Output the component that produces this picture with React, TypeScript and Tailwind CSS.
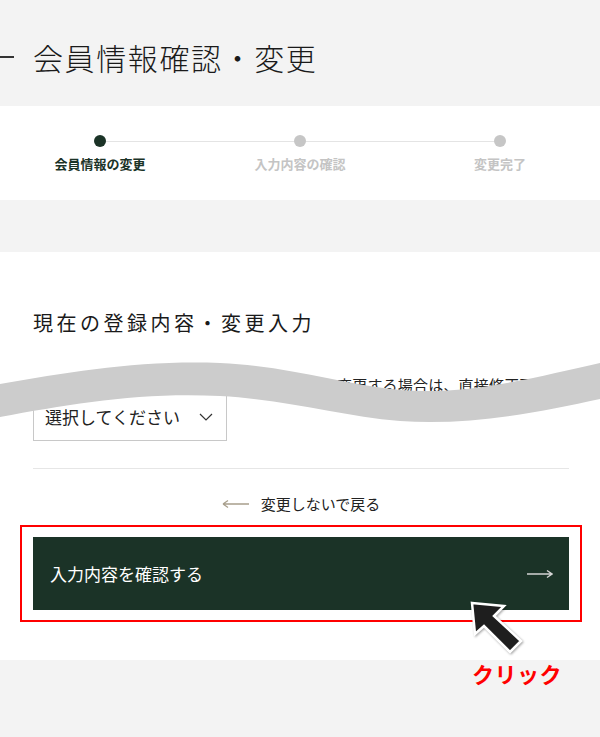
const jp = "font-['Noto_Sans_CJK_JP','Noto_Sans',sans-serif]"

const steps = [
  { label: '会員情報の変更', active: true },
  { label: '入力内容の確認', active: false },
  { label: '変更完了', active: false },
]

function StepBar() {
  return (
    <div className="bg-white pt-[29px] pb-[27px]">
      <div className="relative grid grid-cols-3">
        <div className="absolute left-[16.8%] right-[16.7%] top-[5.5px] h-px bg-[#e4e4e4]" />
        {steps.map((s) => (
          <div key={s.label} className="relative flex flex-col items-center">
            <span
              className={
                s.active
                  ? 'block h-3 w-3 rounded-full bg-[#1b3327]'
                  : 'block h-3 w-3 rounded-full bg-[#c6c6c6]'
              }
            />
            <span
              className={
                s.active
                  ? 'mt-[8px] text-[13px] leading-[18px] font-bold text-[#1b3327]'
                  : 'mt-[8px] text-[13px] leading-[18px] font-bold text-[#c4c4c4]'
              }
            >
              {s.label}
            </span>
          </div>
        ))}
      </div>
    </div>
  )
}

function Wave() {
  return (
    <svg
      className="pointer-events-none absolute left-0 top-[340px]"
      width="600"
      height="84"
      viewBox="0 0 600 84"
    >
      <path
        d="M0 44 C70 32 140 20 220 23 C290 26 340 44 400 50 C470 56 540 36 600 23 L600 59 C540 72 470 86 400 81 C340 76 290 60 220 56 C140 52 70 64 0 77 Z"
        fill="#cccccc"
      />
    </svg>
  )
}

function Cursor() {
  return (
    <svg
      className="pointer-events-none absolute left-[462px] top-[596px] drop-shadow-[1px_1px_1px_rgba(0,0,0,0.35)]"
      width="70"
      height="66"
      viewBox="0 0 70 66"
    >
      <polygon
        points="10,7 42,10 32,20 59,45 48,56 22,30 13,38"
        fill="#1e1e1e"
        stroke="#ffffff"
        strokeWidth="2.5"
        strokeLinejoin="miter"
      />
    </svg>
  )
}

export default function App() {
  return (
    <div className={`relative min-h-[737px] bg-[#f3f3f3] text-[#222] ${jp}`}>
      {/* page title */}
      <div className="flex items-center pt-[37px] pb-[29px]">
        <span className="block h-[1.5px] w-[14px] bg-[#333]" />
        <h1 className="ml-[19px] text-[30px] leading-[40px] font-light tracking-[1.6px] text-[#1a1a1a]">
          会員情報確認・変更
        </h1>
      </div>

      <StepBar />

      <div className="h-[52px]" />

      <div className="bg-white pl-[33px] pr-[31px] pt-[56px] pb-[50px]">
        <h2 className="text-[20px] leading-[30px] tracking-[3.5px] text-[#1a1a1a]">
          現在の登録内容・変更入力
        </h2>
        <p className="mt-[37px] whitespace-nowrap text-[15px] leading-[20px] tracking-[0.2px]">
          お客様のご登録内容をご確認のうえ、内容を変更する場合は、直接修正下さい
        </p>
        <button className="-mt-[2px] flex h-[48px] w-[194px] items-center justify-between border border-[#c8c8c8] pl-[11px] pr-[13px] text-[17px]">
          <span>選択してください</span>
          <svg width="14" height="8" viewBox="0 0 14 8" fill="none">
            <path d="M1 1 L7 7 L13 1" stroke="#333" strokeWidth="1.2" />
          </svg>
        </button>

        <div className="mt-[27px] h-px bg-[#e6e6e6]" />

        <div className="mt-[23px] flex items-center justify-center">
          <svg width="28" height="10" viewBox="0 0 28 10" fill="none">
            <path d="M1 5 H27 M1 5 L6 1.5 M1 5 L6 8.5" stroke="#a89f8c" strokeWidth="1.3" />
          </svg>
          <span className="ml-[11px] text-[15px] leading-[24px]">変更しないで戻る</span>
        </div>

        <div className="relative mt-[21px]">
          <div className="pointer-events-none absolute -inset-x-[13px] -inset-y-[12px] border-2 border-[#ff0000]" />
          <button className="flex h-[73px] w-full items-center justify-between bg-[#1b3327] pl-[17px] pr-[16px] text-[17px] text-white">
            <span>入力内容を確認する</span>
            <svg width="26" height="10" viewBox="0 0 26 10" fill="none">
              <path d="M0 5 H25 M20 1.5 L25 5 L20 8.5" stroke="#d4d4d4" strokeWidth="1.4" />
            </svg>
          </button>
        </div>
      </div>

      <Wave />
      <Cursor />

      <span className="absolute left-[472px] top-[657px] text-[22px] leading-[32px] font-bold tracking-[0.5px] text-[#ff0000]">
        クリック
      </span>
    </div>
  )
}
